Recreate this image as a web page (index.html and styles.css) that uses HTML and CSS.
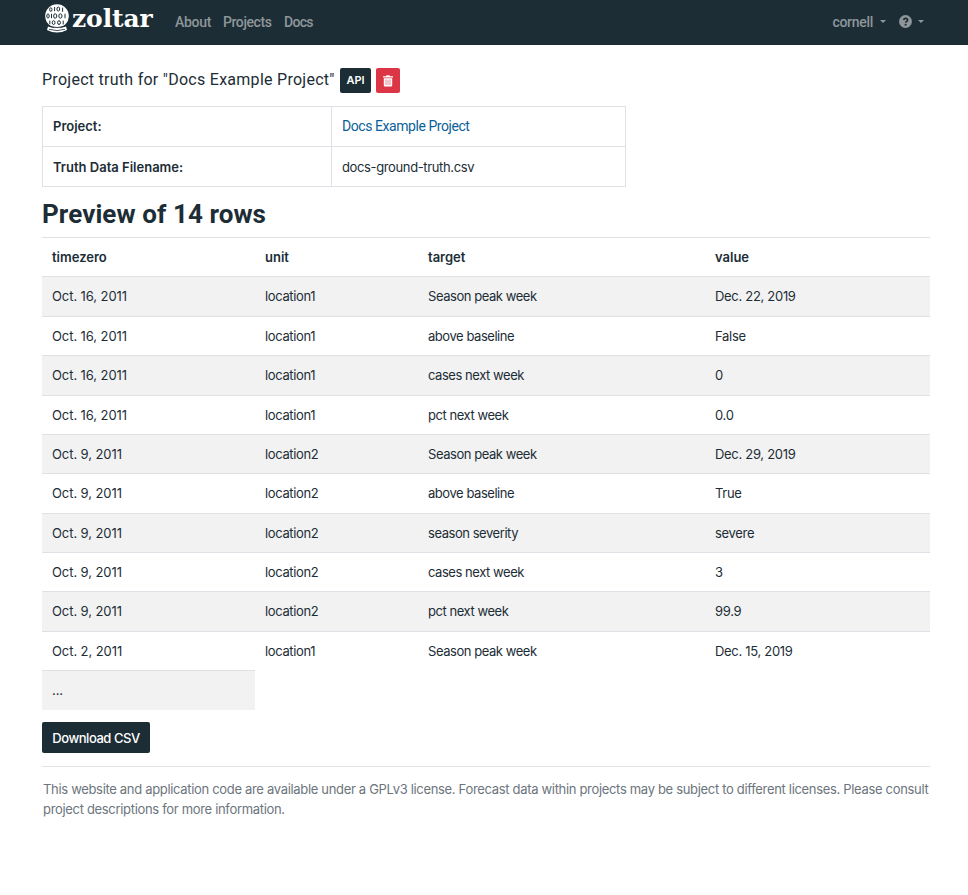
FILE: index.html
```html
<!DOCTYPE html>
<html lang="en">
<head>
<meta charset="utf-8">
<title>Zoltar</title>
<link rel="stylesheet" href="styles.css">
</head>
<body>
<nav class="navbar">
  <a class="brand">
    <svg class="brand-icon" width="24" height="29" viewBox="0 0 24 29">
      <circle cx="12" cy="12" r="11.8" fill="#fff"/>
      <g fill="none" stroke="#1c2d36" stroke-width="1">
        <ellipse cx="5.8" cy="5.6" rx="1.2" ry="1.8"/><path d="M9.6 3v4.2"/><ellipse cx="13.3" cy="5" rx="1.4" ry="2"/><path d="M17.6 3.6v4.2"/>
        <ellipse cx="3" cy="12" rx="1.2" ry="2.1"/><path d="M6.5 9.8v4.4"/><ellipse cx="10.2" cy="12" rx="1.6" ry="2.2"/><ellipse cx="15.4" cy="12" rx="1.6" ry="2.2"/><path d="M20 9.8v4.4"/>
        <path d="M4.8 16.6v3.6"/><ellipse cx="8.6" cy="18.6" rx="1.4" ry="1.9"/><ellipse cx="14" cy="18.6" rx="1.4" ry="1.9"/><path d="M18.2 16.6v3.8"/>
      </g>
      <path d="M3 22.6q9 3 18 0l1 3.4q-10 5-20 0z" fill="#fff"/>
      <path d="M4 22.2q8 2.8 16 0M4 25.3q8 2.6 16 0" fill="none" stroke="#1c2d36" stroke-width=".8"/>
    </svg>
    <span class="brand-name">zoltar</span>
  </a>
  <a class="nav-link about">About</a>
  <a class="nav-link projects">Projects</a>
  <a class="nav-link docs">Docs</a>
  <a class="nav-link user">cornell<i class="caret"></i></a>
  <a class="nav-link help">
    <svg width="13" height="13" viewBox="0 0 512 512"><circle cx="256" cy="256" r="254" fill="currentColor"/><path d="M178 200q20-66 82-66c45 0 78 27 78 68 0 58-77 50-77 108" fill="none" stroke="#1c2d36" stroke-width="66"/><circle cx="260" cy="382" r="42" fill="#1c2d36"/></svg><i class="caret"></i>
  </a>
</nav>
<main class="container">
  <div class="heading">
    <h1 class="title">Project truth for "Docs Example Project"</h1>
    <a class="btn btn-api">API</a>
    <a class="btn btn-delete"><svg width="10" height="12" viewBox="0 0 10 12"><path d="M0 1.2h3L3.5.3h3l.5.9h3v1.3H0z" fill="#fff"/><path d="M.8 3.2h8.4v7.2q0 1.1-1.1 1.1H1.9q-1.1 0-1.1-1.1z" fill="#fff"/><path d="M3 4.5v5.6M5 4.5v5.6M7 4.5v5.6" stroke="#dc3545" stroke-width=".6"/></svg></a>
  </div>
  <table class="info">
    <colgroup><col class="info-label"><col></colgroup>
    <tr><th>Project:</th><td><a class="link">Docs Example Project</a></td></tr>
    <tr class="filename"><th>Truth Data Filename:</th><td>docs-ground-truth.csv</td></tr>
  </table>
  <h2 class="preview-title">Preview of 14 rows</h2>
  <div class="preview">
    <div class="row head"><span>timezero</span><span>unit</span><span>target</span><span>value</span></div>
    <div class="row"><span>Oct. 16, 2011</span><span>location1</span><span>Season peak week</span><span>Dec. 22, 2019</span></div>
    <div class="row"><span>Oct. 16, 2011</span><span>location1</span><span>above baseline</span><span>False</span></div>
    <div class="row"><span>Oct. 16, 2011</span><span>location1</span><span>cases next week</span><span>0</span></div>
    <div class="row"><span>Oct. 16, 2011</span><span>location1</span><span>pct next week</span><span>0.0</span></div>
    <div class="row"><span>Oct. 9, 2011</span><span>location2</span><span>Season peak week</span><span>Dec. 29, 2019</span></div>
    <div class="row"><span>Oct. 9, 2011</span><span>location2</span><span>above baseline</span><span>True</span></div>
    <div class="row"><span>Oct. 9, 2011</span><span>location2</span><span>season severity</span><span>severe</span></div>
    <div class="row"><span>Oct. 9, 2011</span><span>location2</span><span>cases next week</span><span>3</span></div>
    <div class="row"><span>Oct. 9, 2011</span><span>location2</span><span>pct next week</span><span>99.9</span></div>
    <div class="row"><span>Oct. 2, 2011</span><span>location1</span><span>Season peak week</span><span>Dec. 15, 2019</span></div>
    <div class="row more"><span>...</span></div>
  </div>
  <a class="btn btn-download">Download CSV</a>
  <footer class="footer">This website and application code are available under a GPLv3 license. Forecast data within projects may be subject to different licenses. Please consult<br>project descriptions for more information.</footer>
</main>
</body>
</html>
```
FILE: styles.css
```css
* { box-sizing: border-box; }
body {
  margin: 0;
  background: #fff;
  color: #1c2d36;
  font: 13px/19.7px Inter, "Liberation Sans", sans-serif;
}
.navbar {
  display: flex;
  height: 45px;
  padding: 0 44px 0 45px;
  background: #1c2d36;
}
.brand { display: flex; width: 130px; padding-top: 4px; }
.brand-icon { flex: none; }
.brand-name {
  margin-left: 3px;
  padding-top: 1px;
  color: #fff;
  font: bold 25px/28px "DejaVu Serif", serif;
  letter-spacing: -0.1px;
}
.nav-link {
  display: flex;
  align-items: center;
  height: 43px;
  color: #8e969a;
  font: 500 14px/20px Roboto, sans-serif;
  letter-spacing: -0.3px;
}
.about { width: 48px; }
.projects { width: 61px; letter-spacing: -0.42px; }
.docs { letter-spacing: -0.7px; }
.user { margin-left: auto; }
.help { margin-left: 13px; }
.caret {
  margin-left: 6px;
  border: 3px solid transparent;
  border-top-color: currentColor;
  border-bottom: 0;
}
.user .caret { margin-left: 7px; }
.container { width: 888px; margin-left: 42px; padding-top: 23px; }
.heading { display: flex; height: 38px; }
.title {
  width: 298px;
  margin: 0;
  font: 400 16px/23px Roboto, sans-serif;
  letter-spacing: 0.27px;
  white-space: nowrap;
}
.btn {
  display: inline-flex;
  align-items: center;
  justify-content: center;
  border-radius: 2px;
  background: #1c2d36;
  color: #fff;
  font-weight: 600;
}
.btn-api { width: 31px; height: 25px; padding-top: 1px; font-size: 11px; }
.btn-delete { width: 24px; height: 25px; margin-left: 5px; background: #dc3545; }
.info {
  width: 584px;
  border-collapse: collapse;
  table-layout: fixed;
}
.info-label { width: 289px; }
.info th, .info td {
  height: 40px;
  padding: 0 10px;
  border: 1px solid #dee2e6;
  text-align: left;
}
.info th { font-weight: 600; }
.info td { letter-spacing: -0.37px; }
.info .filename th, .info .filename td { padding-top: 2px; }
.info .link { color: #0b5f99; font: 14px/20px Roboto, sans-serif; letter-spacing: -0.44px; }
.preview-title {
  height: 50px;
  margin: 0;
  padding-top: 10px;
  font: 700 26px/34px Roboto, sans-serif;
  letter-spacing: 0.08px;
}
.row {
  display: grid;
  grid-template-columns: 213px 163px 287px 225px;
  height: 39.38px;
  border-top: 1px solid #dee2e6;
  letter-spacing: -0.45px;
}
.row span { padding: 10px 10px 0; white-space: nowrap; }
.row span:nth-child(1) { letter-spacing: -0.08px; }
.row span:nth-child(2) { letter-spacing: -0.36px; }
.row span:nth-child(4) { letter-spacing: -0.3px; }
.row:nth-child(even) { background: #f2f2f2; }
.row.head span { font-weight: 600; letter-spacing: 0; }
.more { width: 213px; }
.btn-download {
  width: 108px;
  height: 31px;
  margin-top: 12px;
  padding-top: 3px;
  font-weight: 500;
  letter-spacing: -0.46px;
}
.footer {
  margin-top: 13px;
  padding: 12px 0 0 1px;
  border-top: 1px solid #e2e4e6;
  color: #6c757d;
  letter-spacing: -0.322px;
  line-height: 20px;
  white-space: nowrap;
}
```
